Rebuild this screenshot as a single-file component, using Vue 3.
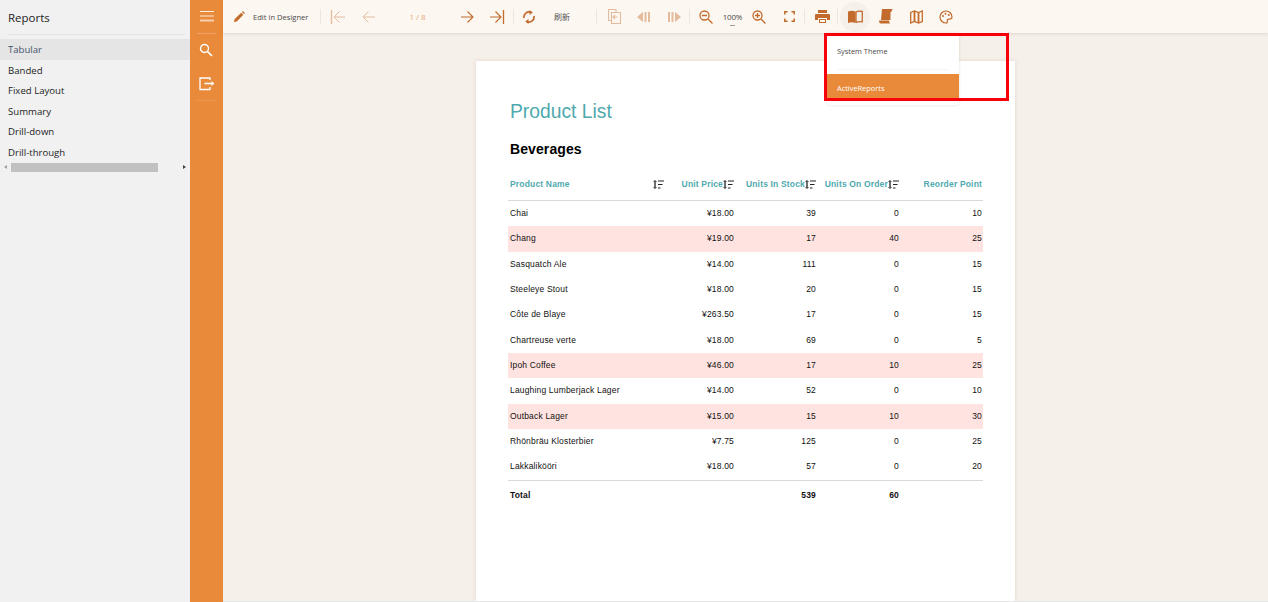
<script setup>
const reports = ['Tabular', 'Banded', 'Fixed Layout', 'Summary', 'Drill-down', 'Drill-through']
const headers = [
  { label: 'Product Name', sort: true },
  { label: 'Unit Price', sort: true },
  { label: 'Units In Stock', sort: true },
  { label: 'Units On Order', sort: true },
  { label: 'Reorder Point', sort: false }
]
const rows = [
  ['Chai', '¥18.00', 39, 0, 10, false],
  ['Chang', '¥19.00', 17, 40, 25, true],
  ['Sasquatch Ale', '¥14.00', 111, 0, 15, false],
  ['Steeleye Stout', '¥18.00', 20, 0, 15, false],
  ['Côte de Blaye', '¥263.50', 17, 0, 15, false],
  ['Chartreuse verte', '¥18.00', 69, 0, 5, false],
  ['Ipoh Coffee', '¥46.00', 17, 10, 25, true],
  ['Laughing Lumberjack Lager', '¥14.00', 52, 0, 10, false],
  ['Outback Lager', '¥15.00', 15, 10, 30, true],
  ['Rhönbräu Klosterbier', '¥7.75', 125, 0, 25, false],
  ['Lakkalikööri', '¥18.00', 57, 0, 20, false]
]
</script>

<template>
  <div class="app">
    <aside class="sidebar">
      <div class="side-title">Reports</div>
      <ul class="report-list">
        <li v-for="(r, i) in reports" :key="r" :class="{ selected: i === 0 }">{{ r }}</li>
      </ul>
      <div class="hscroll">
        <span class="arrow-l"></span>
        <span class="thumb"></span>
        <span class="arrow-r"></span>
      </div>
    </aside>

    <nav class="rail">
      <button class="rail-btn burger">
        <svg width="14" height="12" viewBox="0 0 14 12"><path d="M0 .5h14M0 5h14" stroke="#fff" stroke-opacity=".85" fill="none"/><path d="M0 9.500h14" stroke="#fff" stroke-opacity=".6" stroke-width="2" fill="none"/></svg>
      </button>
      <div class="rail-sep"></div>
      <button class="rail-btn nudge">
        <svg width="14" height="14" viewBox="0 0 14 14" fill="none" stroke="#fff" stroke-width="1.400"><circle cx="5.500" cy="5.500" r="4"/><path d="M8.500 8.500l4.500 4.500" stroke-width="1.700"/></svg>
      </button>
      <button class="rail-btn">
        <svg width="16" height="14" viewBox="0 0 16 14" fill="none" stroke="#fff" stroke-width="1.300"><path d="M11 3V1H1v11.500h10V10"/><path d="M5.500 6.500h9" stroke-width="1.600"/><path d="M12.500 4l2.800 2.500L12.500 9z" fill="#fff" stroke="none"/></svg>
      </button>
      <div class="rail-sep low"></div>
    </nav>

    <main class="main">
      <header class="toolbar">
        <button class="tool edit">
          <svg width="11" height="11" viewBox="0 0 12 12" fill="#c26b2c"><path d="M0 12l.6-3L7.800 1.800l2.400 2.400L3 11.400zM8.600 1l1-1 2.400 2.400-1 1z"/></svg>
          <span>Edit in Designer</span>
        </button>
        <span class="sep"></span>

        <button class="tool off gap2">
          <svg width="16" height="14" viewBox="0 0 16 14" fill="none" stroke="#c26b2c"><path d="M1.500 0v14" stroke-width="1.300"/><path d="M15 7H4M9.500 1.500L4 7l5.500 5.500"/></svg>
        </button>
        <button class="tool off">
          <svg width="13" height="12" viewBox="0 0 13 12" fill="none" stroke="#c26b2c"><path d="M13 6H1M6.500.5L1 6l5.500 5.500"/></svg>
        </button>
        <div class="pager">1 / 8</div>
        <button class="tool">
          <svg width="13" height="12" viewBox="0 0 13 12" fill="none" stroke="#c26b2c" stroke-width="1.100"><path d="M0 6h12M6.500.5L12 6l-5.500 5.500"/></svg>
        </button>
        <button class="tool">
          <svg width="16" height="14" viewBox="0 0 16 14" fill="none" stroke="#c26b2c" stroke-width="1.100"><path d="M14.500 0v14" stroke-width="1.300"/><path d="M1 7h11M6.500 1.500L12 7l-5.500 5.500"/></svg>
        </button>
        <span class="sep near"></span>

        <button class="tool">
          <svg width="12" height="14" viewBox="0 0 12 14" fill="none" stroke="#c26b2c" stroke-width="1.700"><path d="M1 8A5 5 0 0 1 8 2.500"/><path d="M11 6a5 5 0 0 1-7 5.500"/><path d="M6.500 0l3.300 2.600L6.500 5zM5.500 9l-3.300 2.400L5.500 14z" fill="#c26b2c" stroke="none"/></svg>
        </button>
        <div class="tool-label">刷新</div>
        <span class="sep wide"></span>

        <button class="tool off gap2">
          <svg width="13" height="15" viewBox="0 0 13 15" fill="none" stroke="#c26b2c" stroke-width="1.100"><path d="M3.500 11.500H.5V.5H8v3"/><path d="M3.500 3.500h9v11h-9z"/><path d="M5.500 8h4M7 6L5 8l2 2"/></svg>
        </button>
        <button class="tool off">
          <svg width="14" height="10" viewBox="0 0 14 10" fill="#c26b2c"><path d="M6 0v10L0 5zM7.500 0h2v10h-2zM11 0h2v10h-2z"/></svg>
        </button>
        <button class="tool off">
          <svg width="14" height="10" viewBox="0 0 14 10" fill="#c26b2c"><path d="M8 0v10l6-5zM1 0h2v10H1zM4.500 0h2v10h-2z"/></svg>
        </button>
        <span class="sep"></span>

        <button class="tool gap1">
          <svg width="14" height="14" viewBox="0 0 14 14" fill="none" stroke="#c26b2c" stroke-width="1.300"><circle cx="5.500" cy="5.500" r="4.500"/><path d="M3 5.500h5M9 9l4.500 4.500"/></svg>
        </button>
        <div class="zoom-val">100%<i></i></div>
        <button class="tool">
          <svg width="14" height="14" viewBox="0 0 14 14" fill="none" stroke="#c26b2c" stroke-width="1.300"><circle cx="5.500" cy="5.500" r="4.500"/><path d="M3 5.500h5M5.500 3v5M9 9l4.500 4.500"/></svg>
        </button>
        <button class="tool">
          <svg width="11" height="11" viewBox="0 0 11 11" fill="none" stroke="#c26b2c" stroke-width="1.500"><path d="M.8 3.500V.8h2.700M7.500.8h2.700v2.700M10.200 7.500v2.700H7.500M3.500 10.200H.8V7.500"/></svg>
        </button>
        <span class="sep"></span>

        <button class="tool gap2">
          <svg width="15" height="13" viewBox="0 0 15 13" fill="#c26b2c"><path d="M3 0h9v3H3zM1 4h13a1 1 0 0 1 1 1v5h-3V8H3v2H0V5a1 1 0 0 1 1-1zM4 9h7v4H4z"/><path d="M5 10h5v2H5z" fill="#fdf7f1"/></svg>
        </button>
        <span class="sep"></span>

        <button class="tool active gap2">
          <svg width="15" height="13" viewBox="0 0 15 13"><path d="M0 1.500C2.500.500 5 .500 7.500 1.500V13C5 12 2.500 12 0 13z" fill="#c26b2c"/><path d="M8 2c2-1 4-1 6.300-.5v10.300C12 11.300 10 11.500 8 12.500z" fill="none" stroke="#c26b2c" stroke-width="1.300"/></svg>
        </button>
        <button class="tool gap1">
          <svg width="14" height="15" viewBox="0 0 14 15" fill="#c26b2c"><path d="M3 0h11c-1 .5-1.500 1.500-1.500 3h-1v8H2z"/><path d="M0 11.500h10c0 1 .500 2 1 3H1.500C.500 14 0 13 0 11.500z"/></svg>
        </button>
        <button class="tool">
          <svg width="13" height="14" viewBox="0 0 13 14" fill="none" stroke="#c26b2c" stroke-width="1.300"><path d="M.7 2.500l3.800-1.500 4 1.500 3.800-1.500v10.500l-3.800 1.500-4-1.500L.7 13z"/><path d="M4.500 1v11M8.500 2.500v10.500" stroke-width="1.800"/></svg>
        </button>
        <button class="tool">
          <svg width="14" height="14" viewBox="0 0 14 14" fill="none" stroke="#c26b2c" stroke-width="1.200"><path d="M7 1a6 6 0 0 1 6 6c0 2-1.500 2.200-3 2.200-1.500 0-2.200 1-1.700 2.200.4 1-.3 1.800-1.300 1.600A6 6 0 0 1 7 1z"/><circle cx="4" cy="6" r="1" fill="#c26b2c" stroke="none"/><circle cx="6.500" cy="3.800" r="1" fill="#c26b2c" stroke="none"/><circle cx="9.800" cy="5" r="1" fill="#c26b2c" stroke="none"/></svg>
        </button>
      </header>

      <section class="viewer">
        <article class="page">
          <h1>Product List</h1>
          <h2>Beverages</h2>
          <div class="grid head">
            <div v-for="h in headers" :key="h.label" class="hcell">
              <span class="hlabel">{{ h.label }}</span>
              <svg v-if="h.sort" width="11" height="9" viewBox="0 0 11 9" fill="none" stroke="#222"><path d="M2 1v7" stroke-width="1.300"/><path d="M.5 2L2 .3 3.500 2M.5 7L2 8.700 3.500 7" stroke-width=".8"/><path d="M5 1h6M5 4.500h4.500M5 8h2.500" stroke-width="1"/></svg>
            </div>
          </div>
          <div v-for="r in rows" :key="r[0]" class="grid row" :class="{ pink: r[5] }">
            <div class="name">{{ r[0] }}</div>
            <div class="num">{{ r[1] }}</div>
            <div class="num">{{ r[2] }}</div>
            <div class="num">{{ r[3] }}</div>
            <div class="num">{{ r[4] }}</div>
          </div>
          <div class="grid total">
            <div class="name">Total</div>
            <div class="num"></div>
            <div class="num">539</div>
            <div class="num">60</div>
            <div class="num"></div>
          </div>
        </article>
      </section>

      <div class="menu">
        <div class="menu-item">System Theme</div>
        <div class="menu-sep"></div>
        <div class="menu-item current">ActiveReports</div>
      </div>
      <div class="callout"></div>
    </main>
  </div>
</template>

<style>
html, body { margin: 0; height: 100%; overflow: hidden; background: #f6f0ea; }
</style>

<style scoped>
.app {
  display: flex;
  width: 1268px;
  height: 602px;
  overflow: hidden;
  font-family: "Open Sans", "Noto Sans CJK SC", sans-serif;
}
button { border: 0; background: none; padding: 0; font: inherit; }

.sidebar {
  width: 190px;
  flex: none;
  background: #f1f1f1;
  color: #1d1d1d;
}
.side-title {
  margin: 0 6px 0 7px;
  padding: 10px 0 8px 1px;
  height: 16px;
  line-height: 16px;
  font-size: 11.500px;
  border-bottom: 1px solid #e3e3e3;
}
.report-list { list-style: none; margin: 4px 0 0; padding: 0; }
.report-list li {
  height: 20.500px;
  line-height: 21.500px;
  padding-left: 8px;
  font-size: 9.600px;
}
.report-list li.selected { background: #e5e5e5; color: #44546a; }
.hscroll {
  display: flex;
  align-items: center;
  height: 10px;
  position: relative;
}
.thumb { width: 147px; height: 9px; margin-left: 11px; background: #c1c1c1; }
.arrow-l, .arrow-r { position: absolute; width: 0; height: 0; border: 2.500px solid transparent; }
.arrow-l { left: 2px; border-right: 3px solid #a0a0a0; }
.arrow-r { left: 183px; border-left: 3px solid #404040; }

.rail {
  width: 33px;
  flex: none;
  background: #e98a3a;
  display: flex;
  flex-direction: column;
  align-items: center;
}
.rail-btn {
  width: 33px;
  height: 33px;
  display: flex;
  align-items: center;
  justify-content: center;
}
.rail-btn.nudge { padding: 0 1px 1px 0; box-sizing: border-box; }
.rail-sep { width: 19px; height: 1px; background: rgba(255, 255, 255, .22); flex: none; }
.rail-sep.low { background: rgba(255, 255, 255, .12); }

.main {
  flex: 1;
  min-width: 0;
  position: relative;
  display: flex;
  flex-direction: column;
}
.toolbar {
  height: 33px;
  flex: none;
  box-sizing: border-box;
  padding-left: 1px;
  display: flex;
  align-items: center;
  background: #fdf7f1;
  box-shadow: 0 1px 3px rgba(120, 90, 60, .18);
  position: relative;
  z-index: 1;
}
.tool {
  width: 30px;
  height: 30px;
  flex: none;
  display: flex;
  align-items: center;
  justify-content: center;
}
.tool.off svg { opacity: .42; }
.tool.edit {
  width: 96px;
  justify-content: flex-start;
  padding-left: 10px;
  box-sizing: border-box;
  gap: 8px;
  font-size: 7.600px;
  color: #4a4a4a;
  white-space: nowrap;
}
.tool.active { background: #f6f0ea; border-radius: 50%; }
.gap1 { margin-left: 1px; }
.gap2 { margin-left: 2px; }
.sep { width: 1px; height: 15px; background: #efe5da; flex: none; }
.sep.near { margin-left: 1px; }
.sep.wide { margin-left: 16px; }
.pager { width: 69px; flex: none; text-align: center; font-size: 8px; color: #eaa877; }
.tool-label { width: 36px; flex: none; text-align: center; font-size: 8px; color: #555; }
.zoom-val {
  width: 23px;
  flex: none;
  position: relative;
  text-align: center;
  font-size: 8px;
  letter-spacing: -.2px;
  color: #4a4a4a;
}
.zoom-val i {
  position: absolute;
  left: 9px;
  top: 14px;
  width: 5px;
  height: 1px;
  background: #a09a95;
}

.viewer {
  flex: 1;
  min-height: 0;
  overflow: hidden;
  background: #f6f0ea;
  padding: 28px 0 0 253px;
  border-bottom: 1px solid #e6e6e6;
}
.page {
  width: 539px;
  height: 540px;
  box-sizing: border-box;
  padding: 38px 32px 0;
  background: #fff;
  box-shadow: 0 0 4px rgba(120, 100, 80, .18);
  font-family: "Liberation Sans", Arial, sans-serif;
  color: #111;
}
h1 {
  margin: 0 0 0 2px;
  height: 25px;
  line-height: 26px;
  font-size: 19.300px;
  font-weight: 400;
  color: #4fa9ae;
}
h2 {
  margin: 15px 0 0 2px;
  height: 20px;
  line-height: 20px;
  font-size: 14px;
  letter-spacing: .1px;
  font-weight: 700;
  color: #000;
}
.grid {
  display: grid;
  grid-template-columns: 158px 70px 82px 83px 82px;
  width: 475px;
  align-items: center;
  font-size: 8.500px;
  letter-spacing: .17px;
}
.head {
  margin-top: 10px;
  height: 32px;
  box-sizing: border-box;
  border-bottom: 1px solid #d9d9d9;
  padding-bottom: 1px;
}
.hcell {
  display: flex;
  justify-content: flex-end;
  align-items: center;
  color: #4fa9ae;
  font-weight: 700;
  padding-right: 2px;
  white-space: nowrap;
}
.hcell:first-child { justify-content: space-between; padding-left: 2px; }
.hcell:last-child { padding-right: 1px; }
.row { height: 25.330px; box-sizing: border-box; padding-bottom: 1px; }
.pink { background: #ffe3e0; }
.name { padding-left: 2px; white-space: nowrap; }
.num { text-align: right; padding-right: 2px; }
.row .num:last-child { padding-right: 1px; }
.total {
  height: 31px;
  font-weight: 700;
  border-top: 1px solid #d9d9d9;
  padding-bottom: 1px;
  box-sizing: border-box;
}

.menu {
  position: absolute;
  left: 604px;
  top: 33px;
  width: 132px;
  height: 72px;
  background: #fff;
  border-radius: 0 0 3px 3px;
  box-shadow: 0 0 3px rgba(120, 100, 80, .2);
  z-index: 2;
  font-size: 7.400px;
}
.menu-item { height: 36px; line-height: 36px; padding-left: 10px; color: #4a4a4a; }
.menu-sep { height: 1px; margin: 0 10px 4px; background: #f8f5f2; }
.menu-item.current { height: 26px; line-height: 28px; background: #e98a3a; color: #fff; }
.callout {
  position: absolute;
  left: 601px;
  top: 33px;
  width: 185px;
  height: 68px;
  box-sizing: border-box;
  border: 3px solid #f8000a;
  z-index: 3;
}
</style>
